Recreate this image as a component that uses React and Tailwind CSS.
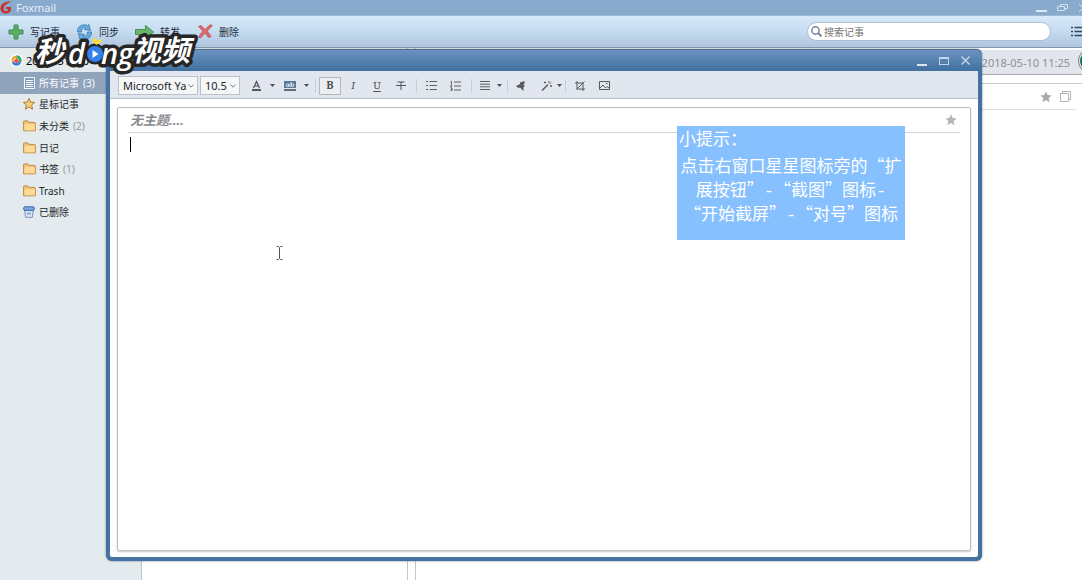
import React from "react";

const ICON = "shrink-0 overflow-visible";

function Caret({ className = "" }) {
  return (
    <svg className={`${ICON} ${className}`} width="5" height="3" viewBox="0 0 5 3" aria-hidden="true">
      <path d="M0 0h5L2.5 3z" fill="#4c5058" />
    </svg>
  );
}

function Star({ size = 12, fill = "#acacac", stroke = "none" }) {
  return (
    <svg className={ICON} width={size} height={size} viewBox="0 0 12 12" aria-hidden="true">
      <path d="M6 .3l1.6 3.8 4.1.3-3.1 2.7 1 4.1L6 9l-3.6 2.2 1-4.1L.3 4.4l4.1-.3z" fill={fill} stroke={stroke} strokeLinejoin="round" />
    </svg>
  );
}

function Folder() {
  return (
    <svg className={ICON} width="13" height="12" viewBox="0 0 13 12" aria-hidden="true">
      <path d="M.6 10.8V1.6Q.6.9 1.3.9h3.5l1.3 1.500h5.400q.8 0 .8.8v7.600z" fill="#f2c277" stroke="#bd8a45" />
      <path d="M1.500 4h10.300v6.300H1.500z" fill="#ffdb96" />
    </svg>
  );
}

function Note() {
  return (
    <svg className={ICON} width="11" height="12" viewBox="0 0 11 12" aria-hidden="true">
      <path d="M.5.5h10v11H.5z" fill="#7f99b8" stroke="#f4f8fb" />
      <path d="M2 3.500h7M2 5.500h7M2 7.500h7M2 9.500h7" stroke="#fff" />
    </svg>
  );
}

function Bin() {
  return (
    <svg className={ICON} width="12" height="12" viewBox="0 0 12 12" aria-hidden="true">
      <path d="M1.700 4h8.600l-.9 7.300H2.600z" fill="#d9e9f8" stroke="#7892b5" />
      <rect x=".7" y=".8" width="10.600" height="3.600" rx="1.300" fill="#7ea9e4" stroke="#3c68a8" />
      <path d="M4 6.500h4v2H4z" fill="#86a9d8" />
    </svg>
  );
}

function ToolButton({ label, icon }) {
  return (
    <button className="flex items-center gap-1.5">
      {icon}
      <span>{label}</span>
    </button>
  );
}

const rows = [
  { label: "所有记事", count: "(3)", icon: <Note />, active: true },
  { label: "星标记事", icon: <Star fill="#f6cf7b" stroke="#ad7d35" /> },
  { label: "未分类", count: "(2)", icon: <Folder /> },
  { label: "日记", icon: <Folder /> },
  { label: "书签", count: "(1)", icon: <Folder /> },
  { label: "Trash", icon: <Folder /> },
  { label: "已删除", icon: <Bin /> },
];

function Sidebar() {
  return (
    <aside className="w-[142px] shrink-0 border-r border-[#c3c7c9] bg-[#e4ebee]">
      <div className="flex h-6 items-center gap-[3px] pl-2.5">
        <svg className={ICON} width="13" height="13" viewBox="0 0 14 14" aria-hidden="true">
          <circle cx="7" cy="7" r="7" fill="#fff" />
          <path d="M2 9.500A5.500 5.500 0 0 1 6.500 1.500L7.500 4.500A3 3 0 0 0 4 8z" fill="#f0a52c" />
          <path d="M6.500 1.500A5.500 5.500 0 0 1 12 9.500L9.500 8A3 3 0 0 0 7.500 4.500z" fill="#38a95b" />
          <path d="M2 9.500a5.500 5.500 0 0 0 10 0L9.500 8A3 3 0 0 1 4 8z" fill="#3a7edb" />
          <path d="M4 8l3-4 3 4-3 2z" fill="#df5147" />
        </svg>
        <span className="text-[11px]">2018051010</span>
      </div>
      <nav className="flex h-[151px] flex-col">
        {rows.map((r) => (
          <a
            key={r.label}
            href="#notes"
            className={`flex flex-1 items-center gap-1 pl-[23px] ${r.active ? "bg-[#8fa3bb] text-white" : "text-[#24282c]"}`}
          >
            <span className="flex w-3 justify-center">{r.icon}</span>
            <span>{r.label}</span>
            {r.count && <span className={r.active ? "text-white" : "text-[#929a9e]"}>{r.count}</span>}
          </a>
        ))}
      </nav>
    </aside>
  );
}

function Header() {
  return (
    <header>
      <div className="flex h-4 items-center justify-between overflow-hidden border-b border-[#9db9d5] bg-[#88aacd]">
        <div className="flex items-center gap-1">
          <svg className={ICON} width="12" height="13" viewBox="0 0 12 13" aria-hidden="true">
            <path d="M11 .5C5 .2.8 2.600.5 7c-.2 3.600 2.300 5.500 5.500 5.500 3 0 5-1.600 5-4.700V6H6v2h2.200c-.2 1.500-1 2.200-2.300 2.200-1.600 0-2.500-1.100-2.300-3C3.900 4.500 6.500 3 11 .5z" fill="#c9312c" />
          </svg>
          <span className="text-[11px] text-[#e6eff8]">Foxmail</span>
        </div>
        <div className="flex items-center gap-2.5">
          <button aria-label="最小化" className="flex h-3 w-[11px] items-end pb-0.5"><span className="h-0.5 w-full bg-[#dbe8f5]" /></button>
          <button aria-label="还原">
            <svg width="11" height="10" viewBox="0 0 11 10" fill="none" stroke="#d5e3f1" aria-hidden="true"><path d="M3.500 3V1.500h7v4H8M.5 3.500h7v4h-7z" /></svg>
          </button>
          <button aria-label="关闭" className="w-1 overflow-hidden">
            <svg className="max-w-none" width="10" height="10" viewBox="0 0 10 10" stroke="#d5e3f1" aria-hidden="true"><path d="M1 1l8 8M9 1L1 9" /></svg>
          </button>
        </div>
      </div>
      <div className="flex h-8 items-center justify-between border-b border-[#8797ac] bg-linear-to-b from-[#d7eafa] via-[#c5dbf0] to-[#afc6df] pl-2 text-[#1e2b3a]">
        <div className="flex items-center gap-4">
          <ToolButton label="写记事" icon={
            <svg className={ICON} width="16" height="16" viewBox="0 0 16 16" aria-hidden="true"><path d="M6 1h4v5h5v4h-5v5H6v-5H1V6h5z" fill="#5caf65" stroke="#3b8c4c" /></svg>
          } />
          <ToolButton label="同步" icon={
            <svg className={ICON} width="17" height="16" viewBox="0 0 17 16" fill="#69abe0" stroke="#3777b1" strokeWidth=".8" aria-hidden="true">
              <path d="M1.500 8C1 3 6-1 11.500 1.500L13 .5l1.500 6-6-1 1.500-1.300C7.500 3 5 5 5.500 8z" />
              <path d="M15.500 8c.5 5-4.500 9-10 6.500l-1.500 1-1.500-6 6 1L7 11.800c2.500 1.200 5-.8 4.500-3.800z" />
            </svg>
          } />
          <ToolButton label="转发" icon={
            <svg className={ICON} width="19" height="14" viewBox="0 0 19 14" aria-hidden="true"><path d="M.5 4.500h10v-4l8 6.500-8 6.500v-4H.5z" fill="#68b66a" stroke="#438f4e" /></svg>
          } />
          <ToolButton label="删除" icon={
            <svg className={`${ICON} ml-0.5`} width="15" height="15" viewBox="0 0 15 15" aria-hidden="true"><path d="M.5 2.500l2.500-1L7 5.500 12 .8l2.500.7L9.300 7l3.700 5.500-2.500 1L7 9l-4.500 5L.5 13l4.300-6z" fill="#dc6a6c" stroke="#bd4a50" strokeWidth=".7" /></svg>
          } />
        </div>
        <div className="flex items-center gap-5">
          <label className="flex h-[19px] w-[244px] items-center gap-0.5 rounded-full border border-[#aabfd3] bg-white pl-[3px]">
            <svg className={ICON} width="11" height="11" viewBox="0 0 11 11" fill="none" stroke="#6b8297" aria-hidden="true"><circle cx="4.500" cy="4.500" r="3.700" strokeWidth="1.400" /><path d="M7.200 7.200l3.300 3.300" strokeWidth="1.800" /></svg>
            <input aria-label="搜索记事" placeholder="搜索记事" className="min-w-0 flex-1 bg-transparent outline-none placeholder:text-[#737373]" />
          </label>
          <button aria-label="列表视图" className="w-[11px] overflow-hidden">
            <svg className="max-w-none" width="16" height="11" viewBox="0 0 16 11" stroke="#35475b" strokeWidth="1.500" aria-hidden="true"><path d="M0 1.500h2M3.500 1.500H16M0 5.500h2M3.500 5.500H16M0 9.500h2M3.500 9.500H16" /></svg>
          </button>
        </div>
      </div>
    </header>
  );
}

function Separator() {
  return <span className="h-3.5 w-px shrink-0 bg-[#c9ced6]" />;
}

function FormatButton({ label, className, children }) {
  return (
    <button aria-label={label} className={`flex h-[18px] shrink-0 items-center justify-center font-serif text-[11px] leading-none text-[#4c5058] ${className}`}>
      {children}
    </button>
  );
}

function Picker({ label, value, className }) {
  return (
    <span className={`relative flex h-[19px] shrink-0 items-center border border-[#bcc1c9] bg-[#f5f6f8] ${className}`}>
      <select aria-label={label} className="h-full w-full appearance-none overflow-hidden pr-2.5 pl-1 text-[11px] text-[#24272b] outline-none">
        <option>{value}</option>
      </select>
      <svg className="pointer-events-none absolute right-[3px]" width="6" height="4" viewBox="0 0 6 4" fill="none" stroke="#777c85" aria-hidden="true"><path d="M.5.5L3 3.200 5.500.5" /></svg>
    </span>
  );
}

function FormatBar() {
  return (
    <div role="toolbar" aria-label="格式" className="flex h-7 shrink-0 items-center border-b border-[#b9bec6] bg-[#e2e6ee] pt-0.5 pl-2">
      <Picker label="字体" value="Microsoft YaHei" className="w-20" />
      <Picker label="字号" value="10.5" className="ml-0.5 w-10" />
      <FormatButton label="文字颜色" className="ml-2.5 w-3">
        <svg width="9" height="11" viewBox="0 0 9 11" fill="none" stroke="#4c5058" aria-hidden="true"><path d="M1.500 8l3-6.500 3 6.500M2.500 6h4" strokeWidth="1.200" /><path d="M0 10h9" strokeWidth="1.600" stroke="#30343a" /></svg>
      </FormatButton>
      <Caret className="ml-2" />
      <FormatButton label="背景颜色" className="ml-[9px] w-3">
        <svg width="12" height="10" viewBox="0 0 12 10" aria-hidden="true"><path d="M0 0h12v7H0z" fill="#5b779b" /><path d="M0 9h12" stroke="#3b444f" strokeWidth="1.500" /><g fill="none" stroke="#eaf1f8"><circle cx="3.500" cy="4.300" r="1.300" /><path d="M5 2.500V6M7 1v5" /><circle cx="8.500" cy="4.300" r="1.300" /></g></svg>
      </FormatButton>
      <Caret className="mr-1.5 ml-2" />
      <Separator />
      <FormatButton label="粗体" className="ml-[3px] w-[22px] border border-[#b3b8c0] bg-[#eceef2] font-bold">B</FormatButton>
      <FormatButton label="斜体" className="w-6 italic">I</FormatButton>
      <FormatButton label="下划线" className="w-6 underline underline-offset-2">U</FormatButton>
      <FormatButton label="删除线" className="mr-[3px] w-6">
        <svg width="10" height="9" viewBox="0 0 10 9" stroke="#4c5058" aria-hidden="true"><path d="M1.500 1h7M5 1v8M0 4.500h10" /></svg>
      </FormatButton>
      <Separator />
      <FormatButton label="项目符号" className="ml-0.5 w-6">
        <svg width="11" height="9" viewBox="0 0 11 9" stroke="#5c6067" aria-hidden="true"><path d="M0 .5h2M3.500.5H11M0 4.500h2M3.500 4.500H11M0 8.500h2M3.500 8.500H11" /></svg>
      </FormatButton>
      <FormatButton label="编号" className="mr-1 w-6">
        <svg width="11" height="10" viewBox="0 0 11 10" fill="none" stroke="#5c6067" aria-hidden="true"><path d="M4 1h7M4 5h7M4 9h7M.5.500h1V3M.500 4h1.500L.500 6H2M.500 7h1.500v2.500H.500M1 8.300h1" /></svg>
      </FormatButton>
      <Separator />
      <FormatButton label="对齐" className="ml-[5px] w-4">
        <svg width="10" height="9" viewBox="0 0 10 9" stroke="#5c6067" aria-hidden="true"><path d="M0 .5h10M0 3.200h10M0 5.800h10M0 8.500h10" /></svg>
      </FormatButton>
      <Caret className="mr-[5px] ml-1" />
      <Separator />
      <FormatButton label="插入" className="ml-px w-6">
        <svg width="10" height="10" viewBox="0 0 10 10" fill="#555960" aria-hidden="true"><path d="M0 5l4-2V1.500L8.500 0v3L7 3.500 9 5 7.500 6v4L4 6.500 2.500 7z" /></svg>
      </FormatButton>
      <FormatButton label="画笔" className="ml-1.5 w-4">
        <svg width="12" height="10" viewBox="0 0 12 10" stroke="#555960" fill="none" aria-hidden="true"><path d="M1 9.500l6-6" strokeWidth="1.500" /><path d="M4 .5v2M3 1.500h2M8 0v2M10 4v2M9 5h2M8.500 3l1.500-1.500" /></svg>
      </FormatButton>
      <Caret className="mr-[3px] ml-0.5" />
      <Separator />
      <FormatButton label="截图" className="ml-0.5 w-6">
        <svg width="10" height="10" viewBox="0 0 10 10" stroke="#555960" fill="none" aria-hidden="true"><path d="M2 0v8h8M0 2h8v8M1.500 8.500L9.500.5" /></svg>
      </FormatButton>
      <FormatButton label="图片" className="w-6">
        <svg width="11" height="9" viewBox="0 0 11 9" stroke="#555960" fill="none" aria-hidden="true"><path d="M.5.5h10v8H.5zM1 7l3-3 2.500 3L8 5.500 10 7" /><path d="M7 2.500h1.500" /></svg>
      </FormatButton>
    </div>
  );
}

function Dash() {
  return <span className="font-['Liberation_Mono'] leading-none">-</span>;
}

function Tip() {
  return (
    <div className="absolute top-[18px] right-[65px] h-[114px] w-[228px] bg-[#86c0fe] font-['Noto_Sans_CJK_SC',sans-serif] text-[17px] leading-6 whitespace-nowrap text-white">
      <p className="pl-0.5">小提示：</p>
      <p className="mt-[3px] text-center">
        点击右窗口星星图标旁的“扩
        <br />
        展按钮”<Dash />“截图”图标<Dash />
        <br />
        “开始截屏”<Dash />“对号”图标
      </p>
    </div>
  );
}

function Editor() {
  return (
    <section className="absolute top-[49px] right-[100px] bottom-[19px] left-[106px] flex flex-col rounded-md border-4 border-t-0 border-[#47719f] bg-white shadow-[0_0_2px_#4a6a90]">
      <div className="-mx-1 flex h-[22px] shrink-0 items-center justify-end gap-3 rounded-t-md border-t border-[#52698a] bg-linear-to-b from-[#6a93c1] to-[#42719f] pr-3">
        <button aria-label="最小化" className="flex h-2.5 w-2.5 items-end"><span className="h-0.5 w-full bg-[#d7e5f4]" /></button>
        <button aria-label="最大化" className="h-2 w-2.5 border border-t-2 border-[#c3d6ea]" />
        <button aria-label="关闭">
          <svg width="9" height="9" viewBox="0 0 9 9" stroke="#c9daec" strokeWidth="1.400" aria-hidden="true"><path d="M.5.5l8 8M8.500.5l-8 8" /></svg>
        </button>
      </div>
      <FormatBar />
      <div className="relative mx-[7px] mt-2 mb-1.5 flex min-h-0 flex-1 flex-col rounded-xs border border-[#bdc0c1] px-2.5 shadow-[0_1px_2px_#c4c7c8]">
        <div className="flex h-[25px] shrink-0 items-center border-b border-[#d5d5d5] pr-[3px]">
          <input aria-label="主题" placeholder="无主题...." className="min-w-0 flex-1 pl-0.5 text-[13px] font-bold italic outline-none placeholder:text-[#8b8b8b]" />
          <button aria-label="星标"><Star fill="#b5b5b5" /></button>
        </div>
        <div className="relative flex flex-1">
          <textarea aria-label="正文" className="flex-1 resize-none p-1 outline-none" />
          <span className="absolute top-1 left-0.5 h-[15px] w-px bg-black" />
          <svg className="absolute top-[113px] left-[148px]" width="7" height="14" viewBox="0 0 7 14" fill="none" stroke="#555" aria-hidden="true"><path d="M.5.5H2.500L3.500 1.500 4.500.5h2M3.500 1.500v11M.5 13.500h2l1-1 1 1h2" /></svg>
        </div>
        <Tip />
      </div>
    </section>
  );
}

function Watermark() {
  return (
    <svg className="pointer-events-none absolute top-[30px] left-[30px]" width="170" height="48" viewBox="0 0 170 48" role="img" aria-label="秒dong视频">
      <g className="font-['Noto_Sans_CJK_SC',sans-serif] text-[29px] font-bold italic" fill="#fff" stroke="#262626" strokeWidth="7" strokeLinejoin="round" paintOrder="stroke">
        <text x="102" y="31">视频</text>
        <text x="5" y="32">秒</text>
        <text x="38" y="34" className="font-['Open_Sans',sans-serif] font-semibold">d</text>
        <circle cx="65" cy="24" r="7" />
        <text x="71" y="34" className="font-['Open_Sans',sans-serif] font-semibold">ng</text>
      </g>
      <circle cx="65" cy="24" r="8" fill="#347fe9" />
      <path d="M62.500 20l6 4-6 4z" fill="#fff" />
      <path d="M63 9l3.500 4L71 10" fill="none" stroke="#ffdc2e" strokeWidth="3" />
    </svg>
  );
}

function Reader() {
  return (
    <main className="relative ml-[7px] flex-1 border-l border-[#c3c7c9] bg-white">
      <div className="mt-0.5 flex h-[25px] items-center justify-end border-b border-[#a5a8ad] bg-[#e2e6ec] pr-3 text-[11px] text-[#8c8f94]">创建时间: 2018-05-10 11:25</div>
      <div className="mt-2 border-t border-[#ccc] pr-1.5">
        <div className="flex h-[26px] items-center justify-end gap-2 border-b border-[#dedede] pr-[5px]">
          <button aria-label="星标"><Star fill="#aaa7a7" /></button>
          <button aria-label="扩展">
            <svg width="11" height="11" viewBox="0 0 11 11" fill="none" stroke="#b4b4b4" aria-hidden="true"><path d="M.5 2.500h8v8h-8zM2.500 2.500v-2h8v8h-2" /></svg>
          </button>
        </div>
      </div>
      <span className="absolute top-0 right-0 h-[26px] w-1 overflow-hidden">
        <span className="block size-[26px] rounded-full border border-[#777] bg-[#f4f7f5] p-px"><span className="block size-full rounded-full bg-[#16734c]" /></span>
      </span>
    </main>
  );
}

export default function App() {
  return (
    <div lang="zh-CN" className="relative flex min-h-screen flex-col overflow-hidden bg-white font-['Noto_Sans','Noto_Sans_CJK_SC',sans-serif] text-[10px] leading-none">
      <Header />
      <div className="flex flex-1">
        <Sidebar />
        <section aria-label="记事列表" className="w-[266px] shrink-0 border-r border-[#c3c7c9] bg-white" />
        <Reader />
      </div>
      <Editor />
      <Watermark />
    </div>
  );
}
